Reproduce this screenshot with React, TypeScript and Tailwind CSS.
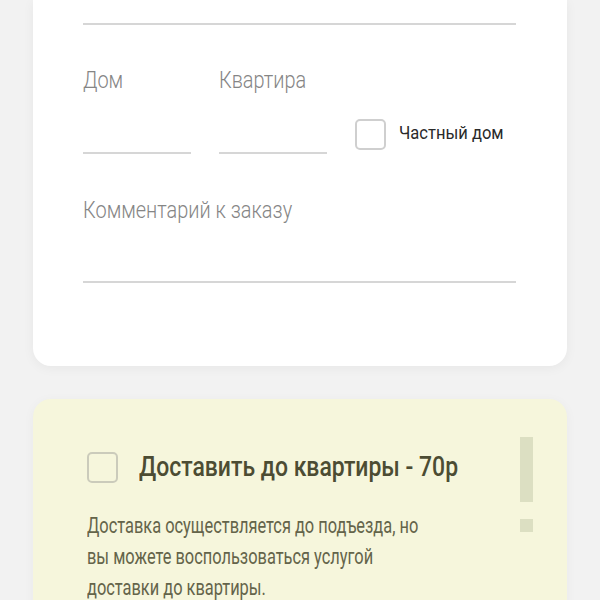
import React from "react";

function C({ children, s = "scale-x-[0.87]" }: { children: React.ReactNode; s?: string }) {
  return <span className={"inline-block origin-left whitespace-nowrap " + s}>{children}</span>;
}

export default function App() {
  const font = { fontFamily: "Roboto, 'Noto Sans', sans-serif" };
  return (
    <div className="min-h-[600px] w-[600px] bg-[#f2f2f2] px-[33px] overflow-hidden" style={font}>
      <div className="bg-white rounded-b-[18px] shadow-[0_2px_12px_rgba(0,0,0,0.05)] pl-[50px] pr-[51px] pb-[83px]">
        <div className="h-[25px] border-b-2 border-[#d6d6d6]" />
        <div className="flex items-end mt-[39px]">
          <div className="w-[108px] shrink-0 flex flex-col">
            <div className="h-[32px] text-[24px] leading-[32px] font-light text-[#858585]">
              <C s="scale-x-[0.83]">Дом</C>
            </div>
            <div className="h-[58px] border-b-2 border-[#d6d6d6]" />
          </div>
          <div className="w-[108px] shrink-0 ml-[28px] flex flex-col">
            <div className="h-[32px] text-[24px] leading-[32px] font-light text-[#858585]">
              <C s="scale-x-[0.83]">Квартира</C>
            </div>
            <div className="h-[58px] border-b-2 border-[#d6d6d6]" />
          </div>
          <div className="ml-[28px] flex items-center mb-[4px] h-[32px] min-w-0">
            <div className="w-[31px] h-[31px] rounded-[5px] border-2 border-[#cfcfcf] bg-white shrink-0" />
            <span className="ml-[13px] text-[19px] leading-[24px] text-[#2a2a2a] mb-[2px]">
              <C>Частный дом</C>
            </span>
          </div>
        </div>
        <div className="mt-[40px] h-[32px] text-[24px] leading-[32px] font-light text-[#858585]">
          <C s="scale-x-[0.83]">Комментарий к заказу</C>
        </div>
        <div className="h-[57px] border-b-2 border-[#d6d6d6]" />
      </div>

      <div className="mt-[33px] bg-[#f6f6dc] rounded-t-[18px] shadow-[0_2px_12px_rgba(0,0,0,0.04)] h-[220px] pl-[54px] pr-[34px] pt-[38px] flex">
        <div className="flex-1 min-w-0">
          <div className="flex items-center h-[60px]">
            <div className="w-[31px] h-[31px] rounded-[5px] border-2 border-[#cbcbbb] bg-[#f6f6dc] shrink-0" />
            <span className="ml-[21px] text-[28px] leading-[36px] font-medium text-[#4c4c33]">
              <C s="scale-x-[0.82]">Доставить до квартиры - 70р</C>
            </span>
          </div>
          <div className="mt-[13px] text-[22px] leading-[31px] text-[#64644a]">
            <div><C s="scale-x-[0.745]">Доставка осуществляется до подъезда, но</C></div>
            <div><C s="scale-x-[0.745]">вы можете воспользоваться услугой</C></div>
            <div><C s="scale-x-[0.745]">доставки до квартиры.</C></div>
          </div>
        </div>
        <div className="w-[13px] shrink-0 flex flex-col">
          <div className="h-[65px] bg-[#dcdfc2]" />
          <div className="mt-[17px] h-[13px] bg-[#dcdfc2]" />
        </div>
      </div>
    </div>
  );
}
